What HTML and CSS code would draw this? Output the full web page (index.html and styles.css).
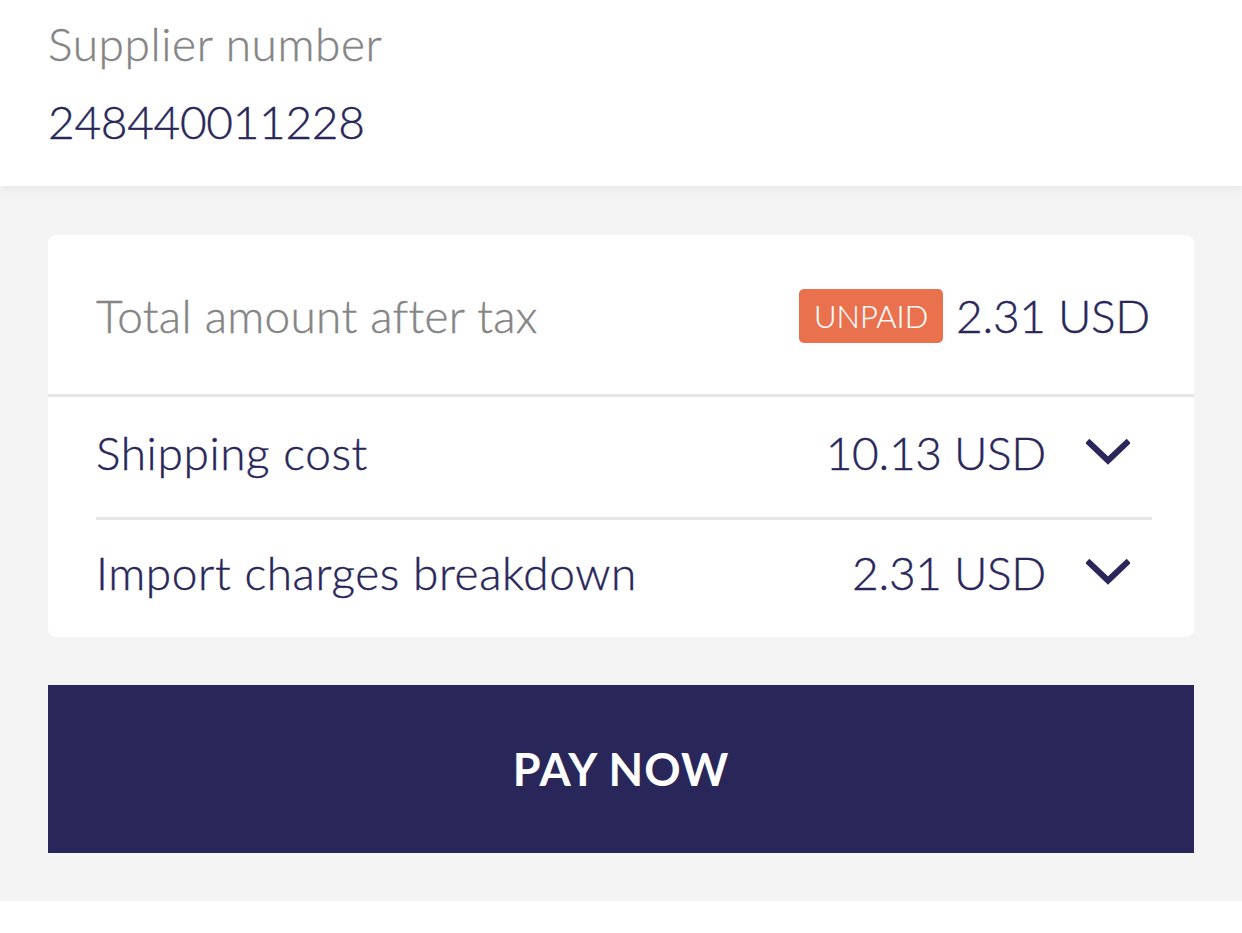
FILE: index.html
```html
<!DOCTYPE html>
<html lang="en">
<head>
<meta charset="utf-8">
<title>Payment</title>
<link rel="stylesheet" href="styles.css">
</head>
<body>
<header class="header">
  <div class="label">Supplier number</div>
  <div class="value">248440011228</div>
</header>
<main class="panel">
  <section class="card">
    <div class="row row-total">
      <span class="muted">Total amount after tax</span>
      <span class="right">
        <span class="badge">UNPAID</span>
        <span class="amount">2.31 USD</span>
      </span>
    </div>
    <div class="row row-ship">
      <span class="text">Shipping cost</span>
      <span class="right">
        <span class="amount">10.13 USD</span>
        <svg class="chev" width="44" height="28" viewBox="0 0 44 28"><path d="M3.5 4 L22 21.5 L40.5 4" fill="none" stroke="#29275a" stroke-width="6" stroke-linecap="square"/></svg>
      </span>
    </div>
    <div class="row row-import">
      <span class="text">Import charges breakdown</span>
      <span class="right">
        <span class="amount">2.31 USD</span>
        <svg class="chev" width="44" height="28" viewBox="0 0 44 28"><path d="M3.5 4 L22 21.5 L40.5 4" fill="none" stroke="#29275a" stroke-width="6" stroke-linecap="square"/></svg>
      </span>
    </div>
  </section>
  <button class="pay">PAY NOW</button>
</main>
</body>
</html>
```
FILE: styles.css
```css
* { box-sizing: border-box; }
html, body { margin: 0; background: #ffffff; }
body {
  font-family: Lato, "Open Sans", sans-serif;
  font-weight: 300;
  font-size: 46px;
  line-height: 56px;
  color: #29275a;
  -webkit-text-stroke: 0.4px currentColor;
}
.header {
  position: relative;
  z-index: 1;
  background: #ffffff;
  padding: 16px 48px 36px;
  box-shadow: 0 3px 10px rgba(0, 0, 0, 0.06);
}
.label { color: #858585; margin-bottom: 22px; letter-spacing: 0.6px; }
.value { color: #29275a; letter-spacing: -0.3px; }

.panel {
  background: #f4f4f4;
  padding: 49px 48px 48px;
}
.card {
  background: #ffffff;
  border-radius: 8px;
}
.row {
  display: flex;
  justify-content: space-between;
  align-items: center;
  padding-left: 48px;
  padding-right: 44px;
}
.row-total {
  height: 162px;
  padding-top: 2px;
  border-bottom: 3px solid #e6e6e6;
}
.row-ship {
  padding: 28px 2px 36px 0;
  margin: 0 42px 0 48px;
  border-bottom: 3px solid #e6e6e6;
}
.row-import {
  padding-top: 25px;
  padding-bottom: 36px;
}
.text { letter-spacing: 0.6px; }
.muted { color: #858585; letter-spacing: 0.3px; }
.right { display: flex; align-items: center; }
.badge {
  display: inline-flex;
  align-items: center;
  justify-content: center;
  width: 144px;
  height: 54px;
  background: #e9714d;
  color: #ffffff;
  border-radius: 5px;
  font-size: 31px;
  line-height: 54px;
  margin-right: 13px;
  -webkit-text-stroke: 0.2px #ffffff;
}
.amount { letter-spacing: -0.3px; }
.chev {
  display: block;
  margin-left: 40px;
  margin-right: 20px;
}
.pay {
  display: block;
  width: 100%;
  height: 168px;
  margin-top: 48px;
  border: 0;
  background: #29275a;
  color: #ffffff;
  font-family: Lato, "Open Sans", sans-serif;
  font-weight: 700;
  font-size: 45px;
  letter-spacing: 1px;
  -webkit-text-stroke: 0;
}
```
